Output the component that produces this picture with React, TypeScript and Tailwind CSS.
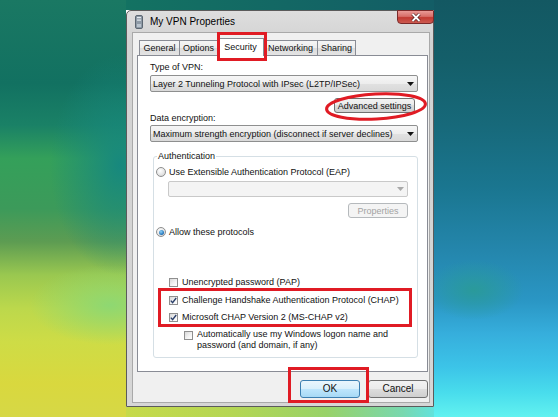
import React from "react";

const font = "font-['Liberation_Sans',Arial,sans-serif]";

function Arrow({ disabled }: { disabled?: boolean }) {
  return (
    <svg width="7" height="4" viewBox="0 0 7 4">
      <path d="M0 0 H7 L3.5 4 Z" fill={disabled ? "#a9a9a9" : "#111"} />
    </svg>
  );
}

function Select({ text }: { text: string }) {
  return (
    <div className="flex h-[17px] items-center justify-between rounded-[2px] border border-[#8e8f8f] bg-[linear-gradient(to_bottom,#f6f6f6_0%,#ededed_50%,#e1e1e1_51%,#d9d9d9_100%)] pl-[2px] pr-[3px]">
      <span className="truncate leading-[12px] text-[#111]">{text}</span>
      <Arrow />
    </div>
  );
}

function Radio({ checked }: { checked?: boolean }) {
  return (
    <div className="flex h-[10px] w-[10px] shrink-0 items-center justify-center rounded-full border border-[#8e8f8f] bg-[radial-gradient(circle_at_40%_35%,#ffffff_0%,#e6e6e6_55%,#c9c9c9_100%)]">
      {checked && (
        <div className="h-[5px] w-[5px] rounded-full bg-[radial-gradient(circle_at_40%_35%,#8fd2f6_0%,#2c7cc0_60%,#174e86_100%)]" />
      )}
    </div>
  );
}

function Check({ checked }: { checked?: boolean }) {
  return (
    <div className="flex h-[9px] w-[9px] shrink-0 items-center justify-center border border-[#8f8f8f] bg-[linear-gradient(135deg,#d8d8d8_0%,#f4f4f4_60%,#ffffff_100%)]">
      {checked && (
        <svg width="7" height="7" viewBox="0 0 7 7">
          <path d="M0.8 3.6 L2.6 5.6 L6.2 1" stroke="#2a3f6a" strokeWidth="1.4" fill="none" />
        </svg>
      )}
    </div>
  );
}

function Row({ label, children, className }: { label: string; children: React.ReactNode; className: string }) {
  return (
    <div className={`flex h-[12px] items-center ${className}`}>
      {children}
      <span className="whitespace-nowrap leading-[12px] text-[#111]">{label}</span>
    </div>
  );
}

function Tab({ label, w, active }: { label: string; w: string; active?: boolean }) {
  if (active) {
    return (
      <div className={`-ml-px flex h-[18px] ${w} items-start justify-center border border-b-0 border-[#898c95] bg-white pt-[2px] leading-[12px]`}>
        {label}
      </div>
    );
  }
  return (
    <div className={`-ml-px mb-px flex h-[15px] ${w} items-center justify-center border border-b-0 border-[#898c95] bg-[linear-gradient(to_bottom,#f5f5f5_0%,#ececec_50%,#dcdcdc_51%,#e4e4e4_100%)] leading-[12px]`}>
      {label}
    </div>
  );
}

export default function App() {
  return (
    <div className={`flex h-[417px] w-[558px] overflow-hidden ${font} text-[9px] text-[#111]`}>
      <div className="h-full w-[126px] bg-[image:radial-gradient(ellipse_70px_110px_at_120px_165px,#17887e_0%,transparent_100%),radial-gradient(ellipse_80px_40px_at_110px_305px,#8ed872_0%,transparent_100%),linear-gradient(to_bottom,#1a7863_0%,#127161_20%,#1a8166_30%,#34a05a_38%,#3c9a5a_50%,#5d9c52_58%,#9ac850_66%,#bcd84c_74%,#cedc46_82%,#d9d83e_92%,#d6d846_100%)]" />
      <div className="flex h-full w-[308px] flex-col">
        <div className="h-[10px] bg-[linear-gradient(to_right,#137262,#135d66)]" />
        <div className="relative flex h-[397px] w-[308px] flex-col rounded-t-[5px] border border-[#5b5b5b] bg-[linear-gradient(to_bottom,#dedede_0%,#d2d2d2_8%,#d6d6d6_100%)]">
          <div className="flex h-[21px] items-center">
            <svg className="ml-[8px]" width="8" height="14" viewBox="0 0 8 14">
              <rect x="0.5" y="0.5" width="7" height="13" rx="1.5" fill="#8e9aa6" stroke="#5c6772" />
              <rect x="2" y="2" width="4" height="1.2" fill="#e4ebf1" />
              <rect x="2" y="4.5" width="4" height="1.2" fill="#e4ebf1" />
              <rect x="2" y="9" width="4" height="3" fill="#b9c4ce" />
            </svg>
            <span className="ml-[7px] text-[10px] leading-[12px] text-black">My VPN Properties</span>
            <div className="-mr-px -mt-px ml-auto flex h-[14px] w-[37px] items-center justify-center self-start rounded-b-[4px] border border-[#7a2a2a] bg-[linear-gradient(to_bottom,#e99a96_0%,#d86e68_45%,#c23a32_55%,#cc5a50_100%)]">
              <svg width="10" height="9" viewBox="0 0 10 9">
                <path d="M1.5 1 L8.5 8 M8.5 1 L1.5 8" stroke="#4a1a1a" strokeWidth="3.2" />
                <path d="M1.5 1 L8.5 8 M8.5 1 L1.5 8" stroke="#ffffff" strokeWidth="1.9" />
              </svg>
            </div>
          </div>

          <div className="mb-[3px] ml-[5px] mr-[3px] flex flex-1 flex-col border border-[#a9a9a9] bg-[#f0f0f0]">
            <div className="relative z-10 -mb-px flex h-[18px] items-end pl-[7px] pt-[5px]" style={{ boxSizing: "content-box" }}>
              <Tab label="General" w="w-[41px]" />
              <Tab label="Options" w="w-[39px]" />
              <Tab label="Security" w="w-[47px]" active />
              <Tab label="Networking" w="w-[55px]" />
              <Tab label="Sharing" w="w-[39px]" />
            </div>

            <div className="ml-[4px] mr-[1px] flex h-[317px] flex-col border border-[#898c95] bg-white pl-[12px] pr-[9px] pt-[5px]">
              <div className="h-[12px] leading-[12px]">Type of VPN:</div>
              <div className="mt-[2px]">
                <Select text="Layer 2 Tunneling Protocol with IPsec (L2TP/IPSec)" />
              </div>
              <div className="mr-[3px] mt-[6px] flex h-[15px] w-[81px] items-center justify-center self-end rounded-[3px] border border-[#707070] bg-[linear-gradient(to_bottom,#f2f2f2_0%,#ebebeb_49%,#dddddd_50%,#cfcfcf_100%)] leading-[12px]">
                Advanced settings
              </div>
              <div className="-mt-px h-[12px] leading-[12px]">Data encryption:</div>
              <div className="mt-[1px]">
                <Select text="Maximum strength encryption (disconnect if server declines)" />
              </div>

              <div className="relative ml-[3px] mt-[14px] flex h-[202px] flex-col rounded-[3px] border border-[#d5dfe5] pl-[2px] pt-[9px]">
                <span className="absolute left-[3px] top-[-7px] bg-white px-[1px] leading-[12px]">Authentication</span>
                <Row label="Use Extensible Authentication Protocol (EAP)" className="gap-[3px]">
                  <Radio />
                </Row>
                <div className="ml-[12px] mr-[9px] mt-[3px] flex h-[16px] items-center justify-end rounded-[2px] border border-[#c9c9c9] bg-[#f4f4f4] pr-[3px]">
                  <Arrow disabled />
                </div>
                <div className="mr-[9px] mt-[6px] flex h-[15px] w-[60px] items-center justify-center self-end rounded-[3px] border border-[#b5b9bc] bg-[#f4f4f4] leading-[12px] text-[#a3a3a3]">
                  Properties
                </div>
                <Row label="Allow these protocols" className="mt-[8px] gap-[3px]">
                  <Radio checked />
                </Row>
                <Row label="Unencrypted password (PAP)" className="ml-[13px] mt-[38px] gap-[4px]">
                  <Check />
                </Row>
                <Row label="Challenge Handshake Authentication Protocol (CHAP)" className="ml-[13px] mt-[6px] gap-[4px]">
                  <Check checked />
                </Row>
                <Row label="Microsoft CHAP Version 2 (MS-CHAP v2)" className="ml-[13px] mt-[5px] gap-[4px]">
                  <Check checked />
                </Row>
                <div className="ml-[28px] mt-[6px] flex items-start gap-[4px]">
                  <div className="mt-[2px]">
                    <Check />
                  </div>
                  <div className="leading-[11px]">
                    <div>Automatically use my Windows logon name and</div>
                    <div>password (and domain, if any)</div>
                  </div>
                </div>
              </div>
            </div>

            <div className="mt-[8px] flex justify-end gap-[8px] pr-[1px]">
              <div className="flex h-[18px] w-[60px] items-center justify-center rounded-[3px] border border-[#3c7fb1] bg-[linear-gradient(to_bottom,#eaf6fd_0%,#d9f0fc_49%,#bee6fd_50%,#a7d9f5_100%)] text-[10px] leading-[12px]">
                OK
              </div>
              <div className="flex h-[18px] w-[60px] items-center justify-center rounded-[3px] border border-[#707070] bg-[linear-gradient(to_bottom,#f2f2f2_0%,#ebebeb_49%,#dddddd_50%,#cfcfcf_100%)] text-[10px] leading-[12px]">
                Cancel
              </div>
            </div>
          </div>

          {/* red annotations */}
          <div className="pointer-events-none absolute left-[90px] top-[21px] z-20 h-[29px] w-[50px] border-[3px] border-[#e01b24]" />
          <svg className="pointer-events-none absolute left-[196px] top-[80px] z-20" width="106" height="31" viewBox="0 0 106 31">
            <ellipse cx="53" cy="15.5" rx="49.5" ry="12.5" transform="rotate(-3 53 15.5)" fill="none" stroke="#e01b24" strokeWidth="3" />
          </svg>
          <div className="pointer-events-none absolute left-[31px] top-[277px] z-20 h-[39px] w-[254px] border-[3px] border-[#e01b24]" />
          <div className="pointer-events-none absolute left-[161px] top-[356px] z-20 h-[36px] w-[81px] border-[3px] border-[#e01b24]" />
        </div>
        <div className="flex-1 bg-[linear-gradient(to_right,#c6da4a_0%,#b4d654_35%,#98d268_65%,#78d8b0_90%,#62e2dc_100%)]" />
      </div>
      <div className="h-full flex-1 bg-[image:radial-gradient(ellipse_50px_30px_at_40px_290px,#2a9a9a_0%,transparent_100%),linear-gradient(to_bottom,#135862_0%,#145f6a_15%,#17697a_30%,#1a7690_45%,#2486ac_60%,#2a96c4_72%,#36aedc_80%,#3cc4e8_88%,#48dcec_94%,#62f2f0_100%)]" />
    </div>
  );
}
